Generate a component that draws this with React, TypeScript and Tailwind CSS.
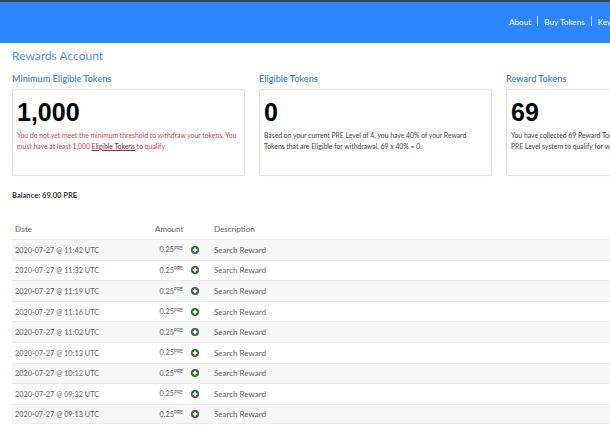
import React from 'react'

const rows = ['11:42', '11:32', '11:19', '11:16', '11:02', '10:13', '10:12', '09:32', '09:13']

function PlusIcon() {
  return (
    <svg width="8" height="8" viewBox="0 0 8 8" className="block">
      <circle cx="4" cy="4" r="4" fill="#2e6b2e" />
      <rect x="3.2" y="1.7" width="1.6" height="4.6" fill="#fff" />
      <rect x="1.7" y="3.2" width="4.6" height="1.6" fill="#fff" />
    </svg>
  )
}

function Card({ title, value, children }: { title: string; value: string; children: React.ReactNode }) {
  return (
    <div className="w-[233px] shrink-0">
      <h3 className="h-[16px] text-[9.1px] leading-[16px] font-semibold text-[#3f86f0]">{title}</h3>
      <div className="mt-[2px] h-[87px] border border-[#e4e4e4] rounded-[2px] pt-[9px] px-[4px] shadow-[0_0_2px_rgba(0,0,0,0.05)]">
        <div className="h-[27px] text-[25px] leading-[27px] font-bold text-black font-['Liberation_Sans',sans-serif]">{value}</div>
        <div className="mt-[4px] text-[6.8px] leading-[10.7px] whitespace-nowrap">{children}</div>
      </div>
    </div>
  )
}

export default function App() {
  return (
    <div className="w-[610px] h-[430px] overflow-hidden bg-white font-['Lato',sans-serif]">
      <div className="h-[2px] bg-[#3a4350]" />
      <header className="h-[41px] bg-[#2d86fd] flex items-start pt-[14px] pl-[509px] text-white text-[8.2px] leading-[12px] whitespace-nowrap">
        <span>About</span>
        <span className="mx-[6px] w-px h-[10px] bg-white/80 shrink-0" />
        <span>Buy Tokens</span>
        <span className="mx-[6px] w-px h-[10px] bg-white/80 shrink-0" />
        <span>Keys</span>
      </header>

      <main className="pl-[12px]">
        <h1 className="mt-[4px] h-[18px] text-[12px] leading-[18px] text-[#5b93ee]">Rewards Account</h1>

        <div className="mt-[6px] flex gap-[14px]">
          <Card title="Minimum Eligible Tokens" value="1,000">
            <p className="text-[#c8424a]">
              You do not yet meet the minimum threshold to withdraw your tokens. You
              <br />
              must have at least 1,000 <span className="underline text-[#8f2b30]">Eligible Tokens</span> to qualify
            </p>
          </Card>
          <Card title="Eligible Tokens" value="0">
            <p className="text-[#444]">
              Based on your current PRE Level of 4, you have 40% of your Reward
              <br />
              Tokens that are Eligible for withdrawal. 69 x 40% = 0.
            </p>
          </Card>
          <Card title="Reward Tokens" value="69">
            <p className="text-[#444]">
              You have collected 69 Reward Tokens. Use the
              <br />
              PRE Level system to qualify for withdrawal.
            </p>
          </Card>
        </div>

        <p className="mt-[13px] h-[12px] text-[7.6px] leading-[12px] font-semibold text-[#222]">Balance: 69.00 PRE</p>

        <div className="mt-[17px] text-[8px] text-[#666] w-[598px]">
          <div className="h-[21px] flex items-center">
            <span className="w-[143px] pl-[3px]">Date</span>
            <span className="w-[28px]">Amount</span>
            <span className="ml-[31px]">Description</span>
          </div>
          {rows.map((time, i) => (
            <div
              key={time}
              className={`h-[20.6px] flex items-center border-t border-[#ececec] last:border-b ${i % 2 === 0 ? 'bg-[#f7f7f7]' : 'bg-white'}`}
            >
              <span className="w-[146px] pl-[3px] mt-[3px] whitespace-nowrap text-[7.3px]">2020-07-27 @ {time} UTC</span>
              <span className="w-[25px] mt-[2px] text-right whitespace-nowrap text-[7.3px]">
                0.25<sup className="text-[5px] leading-none">PRE</sup>
              </span>
              <span className="ml-[8px] w-[8px]">
                <PlusIcon />
              </span>
              <span className="ml-[15px]">Search Reward</span>
            </div>
          ))}
        </div>
      </main>
    </div>
  )
}
